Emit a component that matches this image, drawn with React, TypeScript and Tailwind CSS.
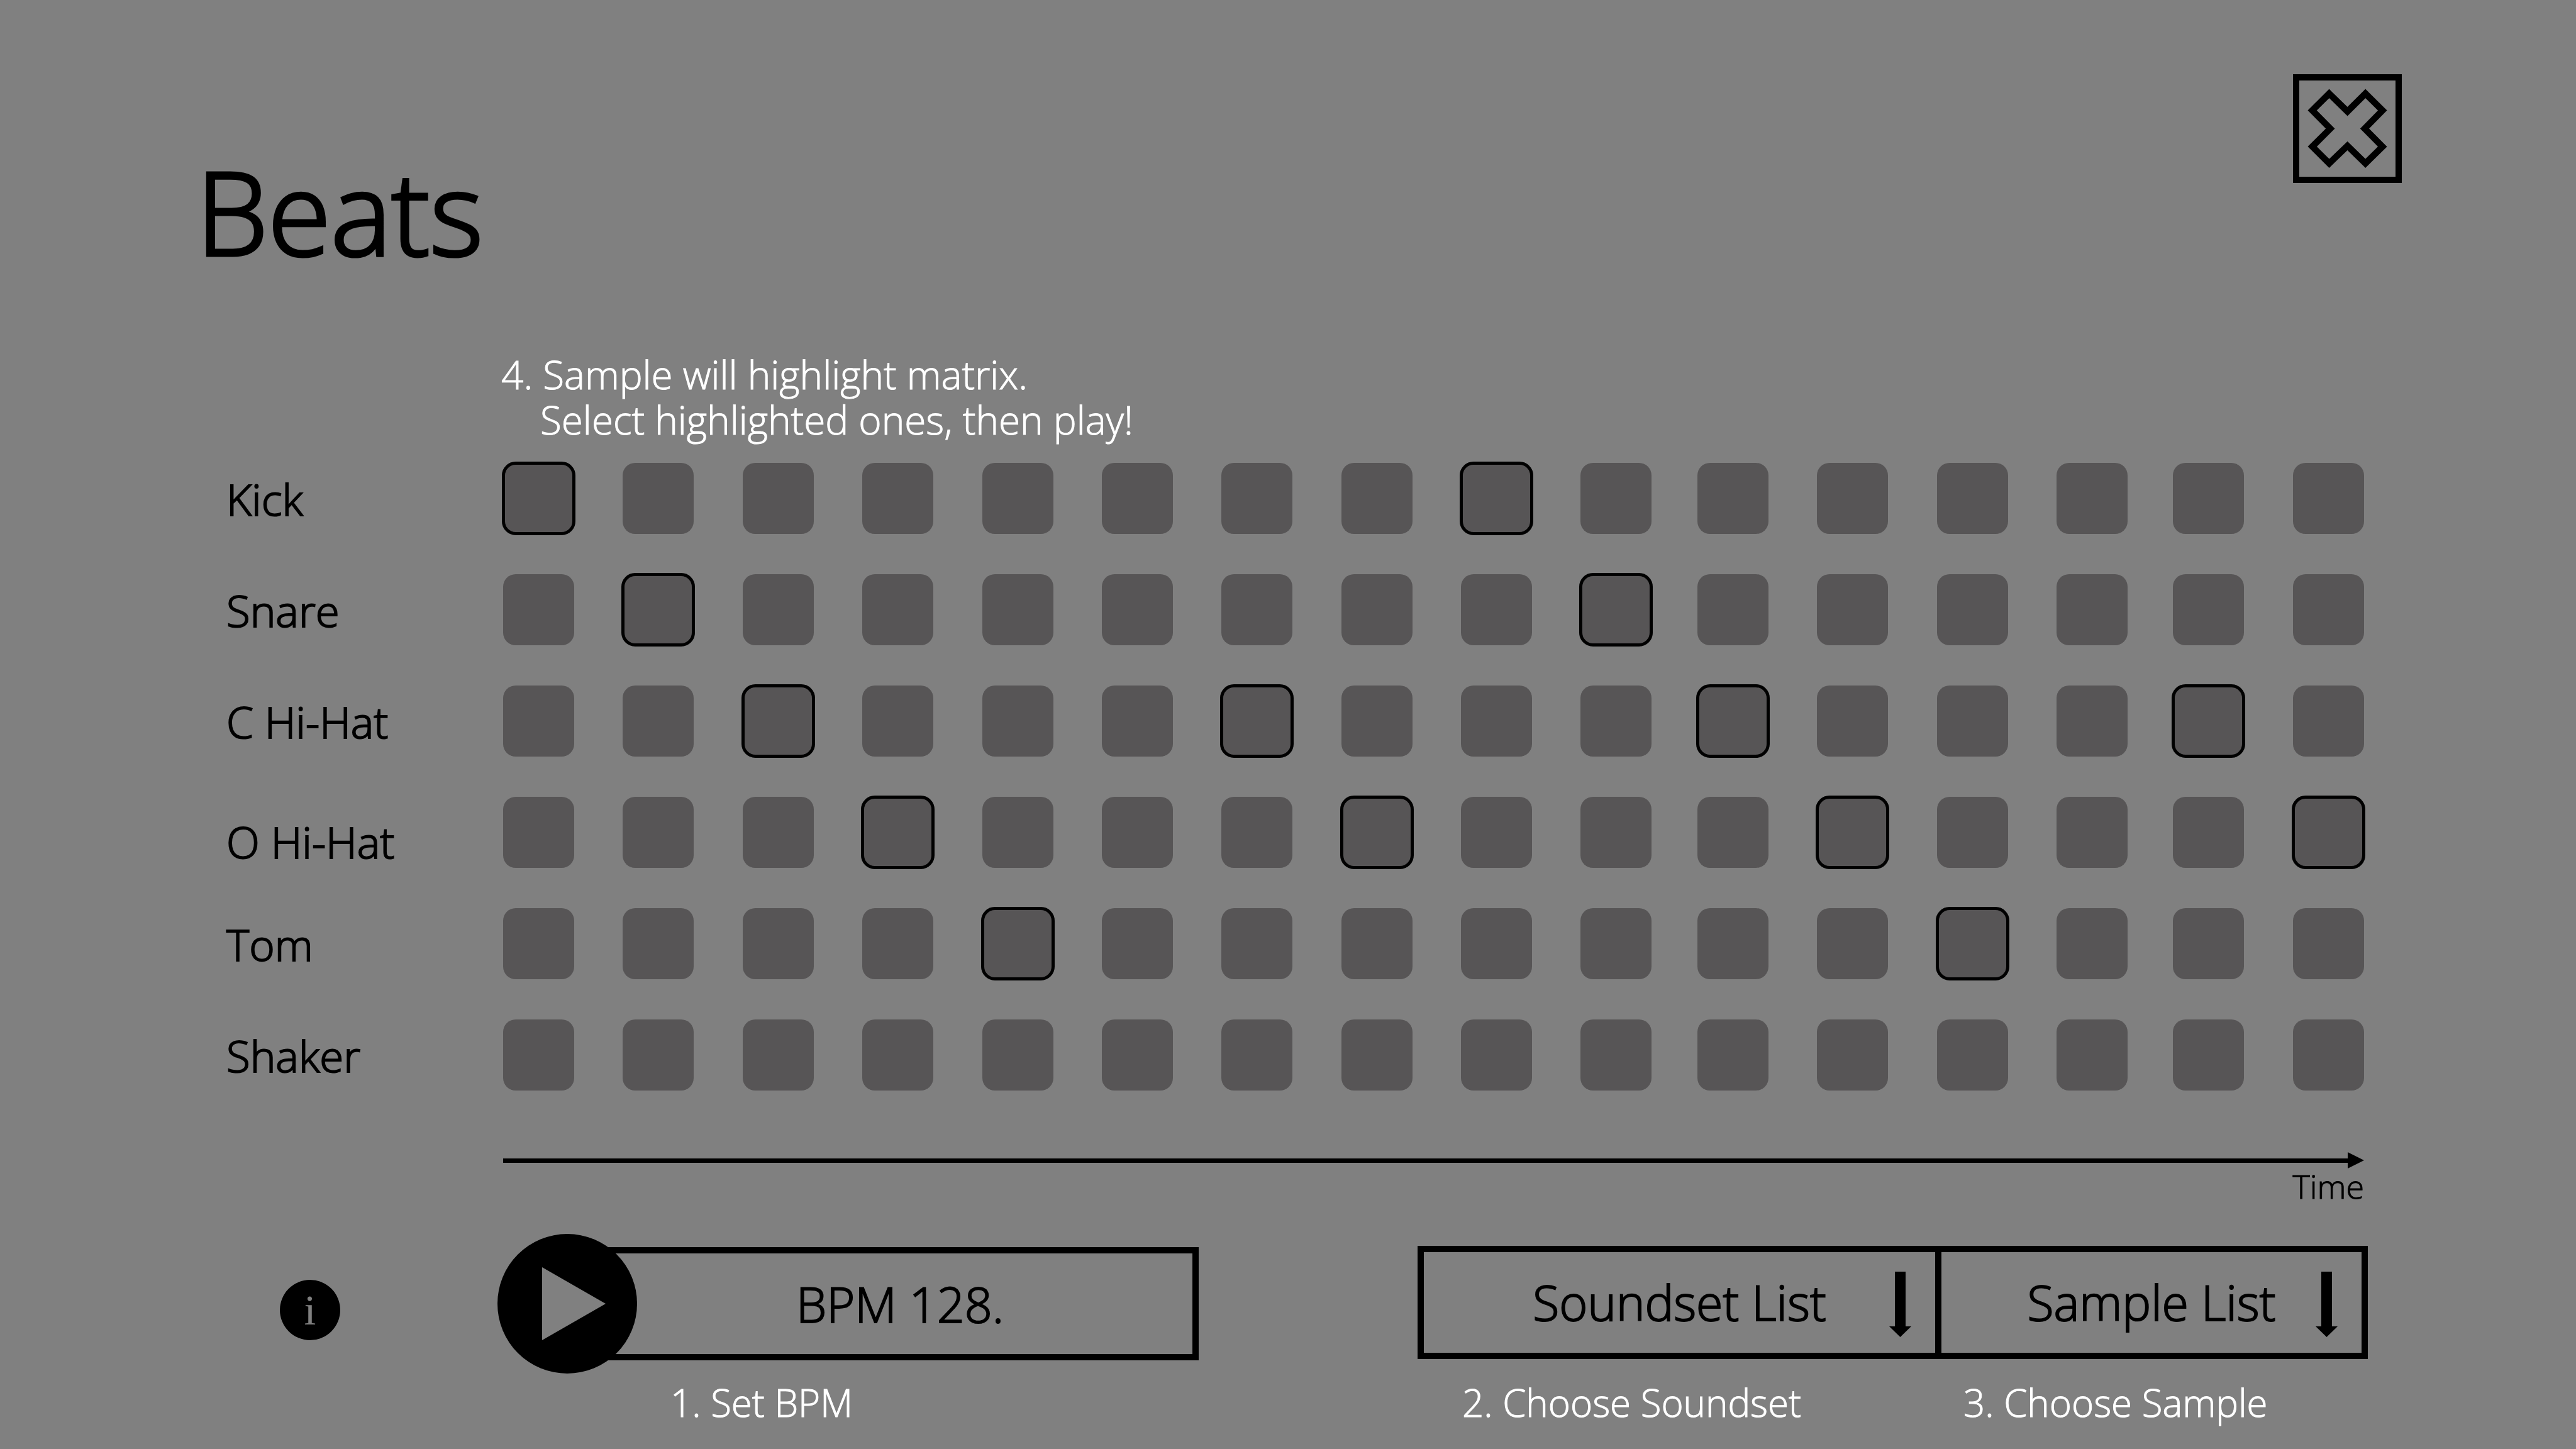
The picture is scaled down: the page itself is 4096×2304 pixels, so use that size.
import { useState } from "react";

type Track = { name: string; highlighted: number[]; labelClass?: string };

const STEPS = 16;

const TRACKS: Track[] = [
  { name: "Kick", highlighted: [0, 8] },
  { name: "Snare", highlighted: [1, 9] },
  { name: "C Hi-Hat", highlighted: [2, 6, 10, 14] },
  { name: "O Hi-Hat", highlighted: [3, 7, 11, 15], labelClass: "pt-7" },
  { name: "Tom", highlighted: [4, 12] },
  { name: "Shaker", highlighted: [] },
];

const FIELD_HINT = "mt-[9px] block text-[60px] leading-[74px] text-white";
const FIELD_TEXT = "text-center text-[77px] leading-[100px] [-webkit-text-stroke:2px]";

function CloseIcon() {
  return (
    <svg viewBox="0 0 717 714" className="size-full" fill="none" stroke="currentColor" strokeWidth="48" aria-hidden="true">
      <polygon points="223,96 359,229 493,96 620,221 487,357 620,491 493,616 359,485 223,616 97,491 231,357 97,221" />
    </svg>
  );
}

function DownArrow() {
  return (
    <svg
      viewBox="0 0 35 104"
      className="pointer-events-none absolute top-[41px] right-[48px] h-[104px] w-[35px]"
      fill="currentColor"
      aria-hidden="true"
    >
      <path d="M9 0h17v87h9L17.500 104 0 87h9z" />
    </svg>
  );
}

function TrackRow({ track }: { track: Track }) {
  const [active, setActive] = useState<number[]>([]);
  const toggle = (step: number) =>
    setActive((now) => (now.includes(step) ? now.filter((s) => s !== step) : [...now, step]));

  return (
    <div role="group" aria-label={track.name} className="flex items-stretch">
      <div
        className={`flex w-[440px] shrink-0 items-center text-[69px] leading-[84px] [-webkit-text-stroke:2px] ${track.labelClass ?? ""}`}
      >
        {track.name}
      </div>
      <div className="grid flex-1 grid-cols-[repeat(9,190fr)_185fr_repeat(3,190fr)_185fr_190fr_113fr]">
        {Array.from({ length: STEPS }, (_, step) => (
          <button
            key={step}
            type="button"
            aria-label={`${track.name} step ${step + 1}`}
            aria-pressed={active.includes(step)}
            onClick={() => toggle(step)}
            className={`size-[113px] rounded-[20px] ${active.includes(step) ? "bg-[#2f2d2e]" : "bg-[#575556]"} ${
              track.highlighted.includes(step) ? "outline-[5px] -outline-offset-3 outline-black" : ""
            }`}
          />
        ))}
      </div>
    </div>
  );
}

function ListField({ id, title, hint, className, hintClass }: { id: string; title: string; hint: string; className: string; hintClass: string }) {
  return (
    <div className={className}>
      <div className="flex h-[222px] items-center pb-1">
        <div className="relative w-full">
          <select
            id={id}
            className={`block h-[180px] w-full appearance-none border-[10px] border-black bg-transparent [text-align-last:center] ${FIELD_TEXT}`}
          >
            <option>{title}</option>
          </select>
          <DownArrow />
        </div>
      </div>
      <label htmlFor={id} className={`${FIELD_HINT} ${hintClass}`}>
        {hint}
      </label>
    </div>
  );
}

export default function App() {
  const [bpm, setBpm] = useState("BPM 128.");

  return (
    <div className="min-h-screen bg-[#808080] font-['Open_Sans',sans-serif] font-light text-black [-webkit-text-stroke:1px]">
      <header className="flex items-start justify-between pt-[118px] pr-[277px] pl-[312px]">
        <h1 className="mt-[117px] text-[182px] leading-[200px] [-webkit-text-stroke:5px]">Beats</h1>
        <button type="button" aria-label="Close" className="size-[173px] border-[10px] border-black">
          <CloseIcon />
        </button>
      </header>

      <main className="mt-[124px] pl-[360px]">
        <section className="pr-[337px]">
          <p className="pl-[437px] text-[62px] leading-[72px] text-white">
            4. Sample will highlight matrix.
            <span className="block pl-[62px]">Select highlighted ones, then play!</span>
          </p>

          <div className="mt-[33px] flex flex-col gap-16">
            {TRACKS.map((track) => (
              <TrackRow key={track.name} track={track} />
            ))}
          </div>

          <div className="mt-[98px] pl-[440px]">
            <div className="flex items-center">
              <div className="h-[7px] flex-1 bg-black" />
              <svg viewBox="0 0 26 26" className="size-[26px]" fill="currentColor" aria-hidden="true">
                <path d="M0 0 26 13 0 26z" />
              </svg>
            </div>
            <p className="text-right text-[52px] leading-[56px]">Time</p>
          </div>
        </section>

        <section className="mt-[48px] flex items-start pr-[331px]">
          <div className="flex h-[222px] w-[431px] shrink-0 items-center pt-5 pl-[85px]">
            <button
              type="button"
              aria-label="Information"
              className="flex size-[96px] items-center justify-center rounded-full bg-black font-['Liberation_Serif',serif] text-[68px] leading-[80px] font-normal text-[#808080] [-webkit-text-stroke:0px]"
            >
              i
            </button>
          </div>

          <div className="min-w-0 flex-[1115]">
            <div className="flex items-center">
              <button type="button" aria-label="Play" className="z-10 size-[222px] shrink-0 rounded-full bg-black text-[#808080]">
                <svg viewBox="0 0 222 222" fill="currentColor" aria-hidden="true">
                  <path d="M71 53 172 111 71 169z" />
                </svg>
              </button>
              <input
                id="bpm"
                type="text"
                value={bpm}
                onChange={(e) => setBpm(e.target.value)}
                className={`-ml-[57px] h-[180px] min-w-0 flex-1 border-[10px] border-black bg-transparent ${FIELD_TEXT}`}
              />
            </div>
            <label htmlFor="bpm" className={`pl-[275px] ${FIELD_HINT}`}>
              1. Set BPM
            </label>
          </div>

          <div className="ml-[348px] flex min-w-0 flex-[1511]">
            <ListField id="soundset" title="Soundset List" hint="2. Choose Soundset" className="min-w-0 flex-[833]" hintClass="pl-[71px]" />
            <ListField id="sample" title="Sample List" hint="3. Choose Sample" className="-ml-[10px] min-w-0 flex-[688]" hintClass="pl-[45px]" />
          </div>
        </section>
      </main>
    </div>
  );
}
